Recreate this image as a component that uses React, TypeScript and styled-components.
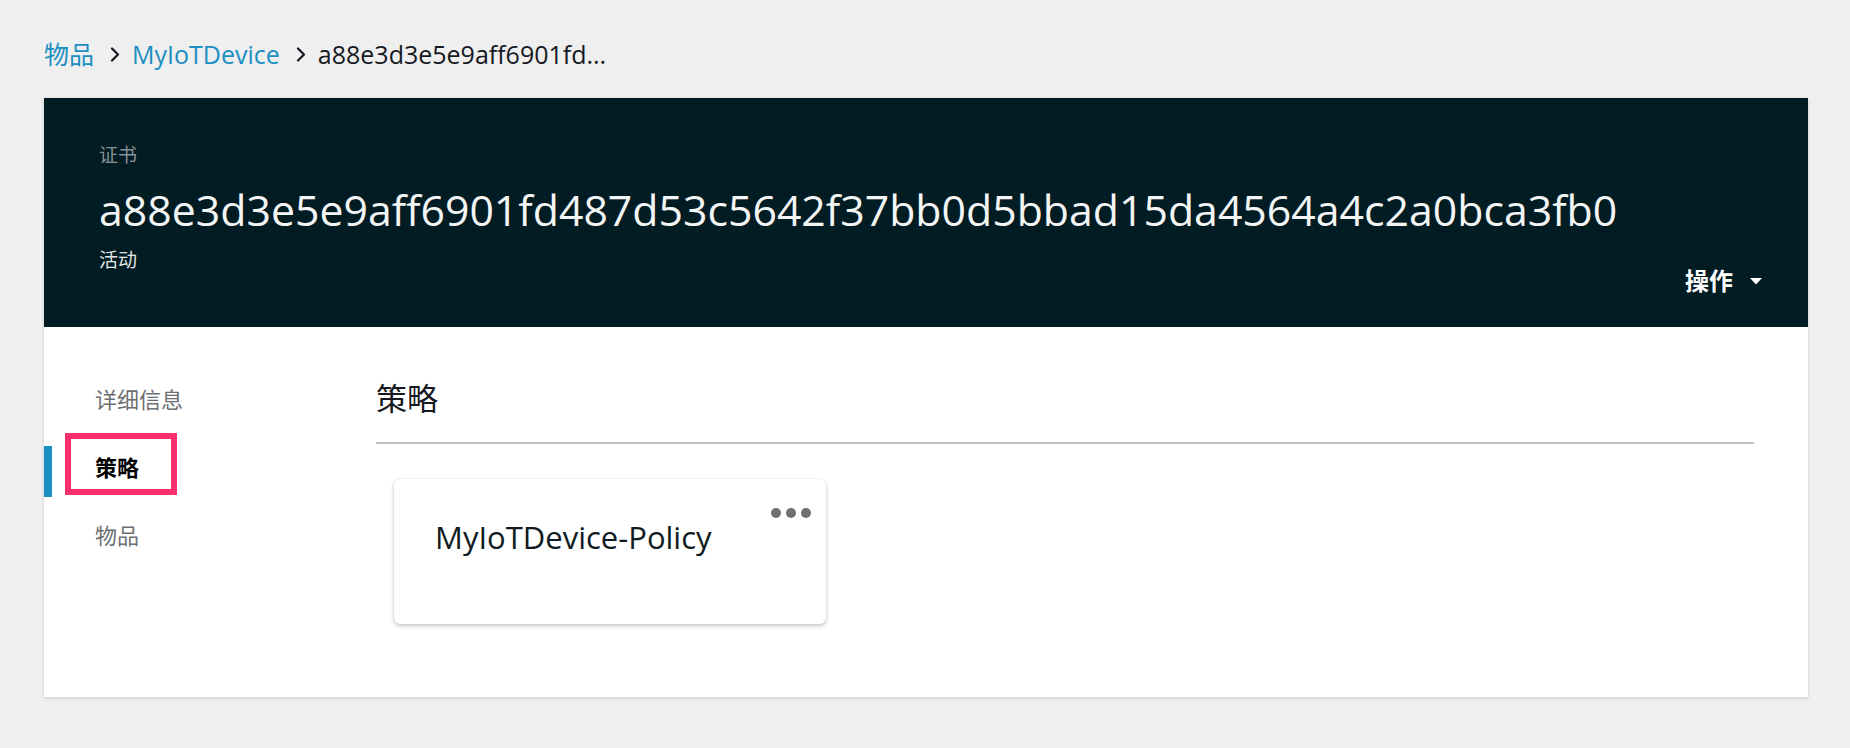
import React from "react";
import styled, { createGlobalStyle } from "styled-components";

const GlobalStyle = createGlobalStyle`
  html, body {
    margin: 0;
    padding: 0;
    background: #efefef;
  }
  body {
    font-family: "Open Sans", "Noto Sans CJK SC", sans-serif;
    -webkit-font-smoothing: antialiased;
  }
  *, *::before, *::after {
    box-sizing: border-box;
  }
`;

const Page = styled.div`
  padding: 37px 42px 40px 44px;
`;

const Breadcrumbs = styled.nav`
  display: flex;
  align-items: center;
  height: 34px;
  margin-bottom: 27px;
  font-size: 25px;
  line-height: 34px;
`;

const Crumb = styled.a<{ $current?: boolean }>`
  color: ${(p) => (p.$current ? "#16191f" : "#1b8ec2")};
  text-decoration: none;
  white-space: nowrap;
`;

const Sep = styled.span`
  display: inline-flex;
  align-items: center;
  margin: 0 12px 0 16px;
`;

const Panel = styled.div`
  background: #ffffff;
  box-shadow: 0 1px 3px rgba(0, 0, 0, 0.16);
`;

const Header = styled.header`
  display: flex;
  justify-content: space-between;
  height: 229px;
  padding: 44px 46px 30px 55px;
  background: #021c24;
`;

const HeaderMain = styled.div`
  display: flex;
  flex-direction: column;
  min-width: 0;
`;

const Eyebrow = styled.div`
  font-size: 19px;
  line-height: 26px;
  color: #879196;
`;

const Title = styled.h1`
  margin: 16px 0 0;
  font-size: 42.8px;
  line-height: 52px;
  font-weight: 400;
  color: #f4f5f5;
  white-space: nowrap;
`;

const Status = styled.div`
  margin-top: 11px;
  font-size: 19px;
  line-height: 26px;
  color: #e3e6e6;
`;

const ActionsButton = styled.button`
  align-self: flex-end;
  display: flex;
  align-items: center;
  gap: 17px;
  padding: 0;
  border: 0;
  background: transparent;
  color: #ffffff;
  font-family: inherit;
  font-size: 24px;
  line-height: 32px;
  font-weight: 700;
  flex-shrink: 0;
  cursor: pointer;
`;

const Body = styled.div`
  display: flex;
  padding-bottom: 73px;
`;

const SideNav = styled.ul`
  width: 332px;
  flex-shrink: 0;
  list-style: none;
  margin: 0;
  padding: 51px 0 0;
  display: flex;
  flex-direction: column;
  gap: 17px;
`;

const NavItem = styled.li<{ $active?: boolean }>`
  position: relative;
  height: 51px;
  padding: 0 0 9px 43px;
  border-left: 8px solid ${(p) => (p.$active ? "#1b8ec2" : "transparent")};
  font-size: 22px;
  line-height: 42px;
  font-weight: ${(p) => (p.$active ? 700 : 400)};
  color: ${(p) => (p.$active ? "#000000" : "#6b6f72")};
`;

const Highlight = styled.span`
  position: absolute;
  left: 13px;
  top: -13px;
  width: 112px;
  height: 62px;
  border: 6px solid #f92f6e;
  pointer-events: none;
`;

const Content = styled.section`
  flex: 1;
  min-width: 0;
  padding: 50px 54px 0 0;
`;

const SectionTitle = styled.h2`
  margin: 0;
  font-size: 31px;
  line-height: 42px;
  font-weight: 400;
  color: #16191f;
`;

const Divider = styled.hr`
  margin: 23px 0 0;
  height: 2px;
  border: 0;
  background: #c0c0c0;
`;

const CardGrid = styled.div`
  display: flex;
  padding: 35px 0 0 18px;
`;

const Card = styled.div`
  display: flex;
  justify-content: space-between;
  align-items: flex-start;
  width: 432px;
  height: 145px;
  padding: 29px 15px 0 41px;
  border-radius: 6px;
  background: #ffffff;
  box-shadow: 0 2px 4px rgba(0, 0, 0, 0.22), 0 0 1px rgba(0, 0, 0, 0.2);
`;

const CardTitle = styled.div`
  margin-top: 8px;
  font-size: 31px;
  line-height: 42px;
  color: #0f1b21;
  white-space: nowrap;
`;

const MoreButton = styled.button`
  display: flex;
  gap: 5px;
  padding: 0;
  border: 0;
  background: transparent;
  cursor: pointer;
`;

const Dot = styled.span`
  width: 10px;
  height: 10px;
  border-radius: 50%;
  background: #6f6f6f;
`;

const Chevron = () => (
  <svg width="10" height="15" viewBox="0 0 10 15" aria-hidden="true">
    <polyline
      points="2,1.5 8,7.5 2,13.5"
      fill="none"
      stroke="#16191f"
      strokeWidth="2.2"
      strokeLinecap="round"
      strokeLinejoin="round"
    />
  </svg>
);

const Caret = () => (
  <svg width="12" height="7" viewBox="0 0 12 7" aria-hidden="true">
    <polygon points="0,0 12,0 6,6.5" fill="#ffffff" />
  </svg>
);

const navItems = [
  { label: "详细信息", active: false },
  { label: "策略", active: true },
  { label: "物品", active: false },
];

export default function App() {
  return (
    <>
      <GlobalStyle />
      <Page>
        <Breadcrumbs>
          <Crumb href="#">物品</Crumb>
          <Sep>
            <Chevron />
          </Sep>
          <Crumb href="#">MyIoTDevice</Crumb>
          <Sep>
            <Chevron />
          </Sep>
          <Crumb $current>a88e3d3e5e9aff6901fd...</Crumb>
        </Breadcrumbs>
        <Panel>
          <Header>
            <HeaderMain>
              <Eyebrow>证书</Eyebrow>
              <Title>a88e3d3e5e9aff6901fd487d53c5642f37bb0d5bbad15da4564a4c2a0bca3fb0</Title>
              <Status>活动</Status>
            </HeaderMain>
            <ActionsButton>
              操作
              <Caret />
            </ActionsButton>
          </Header>
          <Body>
            <SideNav>
              {navItems.map((item) => (
                <NavItem key={item.label} $active={item.active}>
                  {item.label}
                  {item.active && <Highlight />}
                </NavItem>
              ))}
            </SideNav>
            <Content>
              <SectionTitle>策略</SectionTitle>
              <Divider />
              <CardGrid>
                <Card>
                  <CardTitle>MyIoTDevice-Policy</CardTitle>
                  <MoreButton aria-label="更多">
                    <Dot />
                    <Dot />
                    <Dot />
                  </MoreButton>
                </Card>
              </CardGrid>
            </Content>
          </Body>
        </Panel>
      </Page>
    </>
  );
}
